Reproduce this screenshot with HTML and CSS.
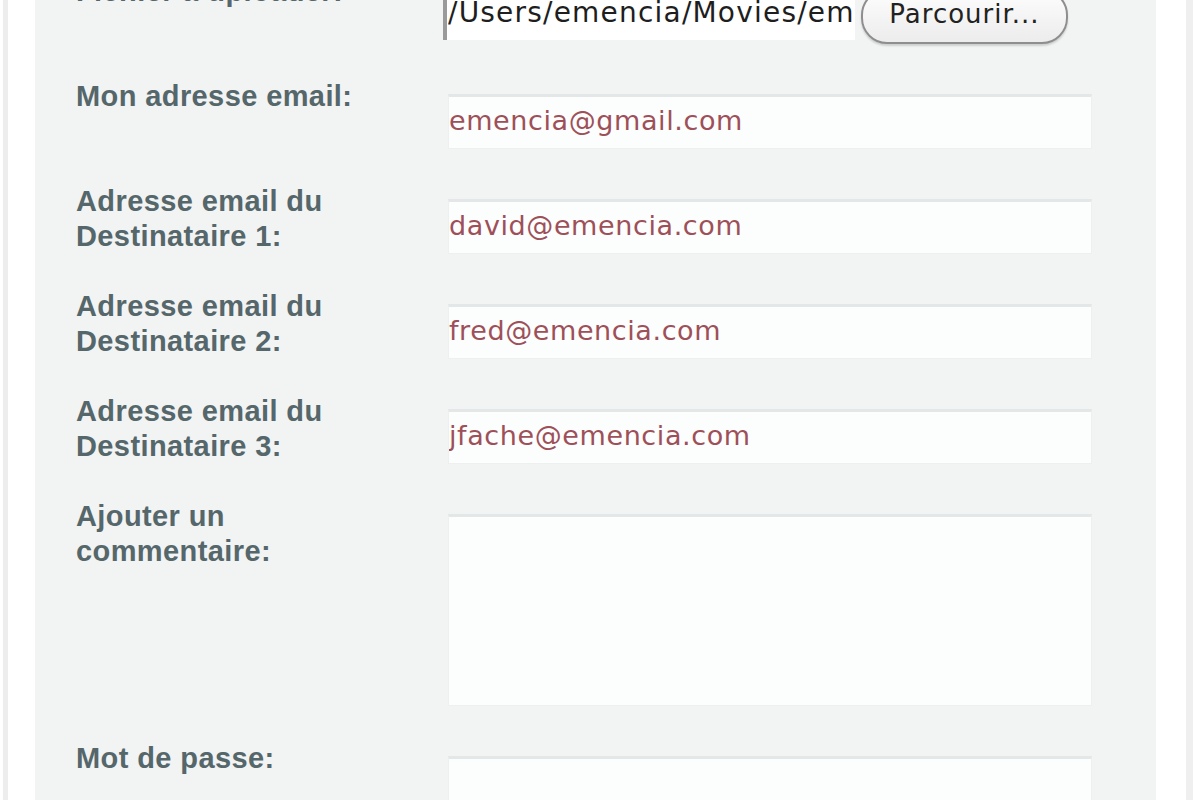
FILE: index.html
```html
<!DOCTYPE html>
<html lang="fr">
<head>
  <meta charset="UTF-8" />
  <meta name="viewport" content="width=device-width, initial-scale=1.0"/>
  <title>Envoyer une vidéo</title>
  <link rel="stylesheet" href="styles.css">
</head>
<body>
  <div class="page">
    <form class="upload-form">
      <div class="row">
        <label for="fichier">Fichier à uploader:</label>
        <div class="file-field">
          <input id="fichier" class="file-path" type="text" value="/Users/emencia/Movies/emencia.mov" readonly>
          <button type="button" class="browse">Parcourir...</button>
        </div>
      </div>

      <div class="row">
        <label for="email">Mon adresse email:</label>
        <input id="email" class="field" type="text" value="emencia@gmail.com">
      </div>

      <div class="row">
        <label for="dest1">Adresse email du Destinataire 1:</label>
        <input id="dest1" class="field" type="text" value="david@emencia.com">
      </div>

      <div class="row">
        <label for="dest2">Adresse email du Destinataire 2:</label>
        <input id="dest2" class="field" type="text" value="fred@emencia.com">
      </div>

      <div class="row">
        <label for="dest3">Adresse email du Destinataire 3:</label>
        <input id="dest3" class="field" type="text" value="jfache@emencia.com">
      </div>

      <div class="row">
        <label for="comment">Ajouter un commentaire:</label>
        <textarea id="comment" class="field comment"></textarea>
      </div>

      <div class="row">
        <label for="pass">Mot de passe:</label>
        <input id="pass" class="field" type="password">
      </div>
    </form>
  </div>
</body>
</html>
```

FILE: styles.css
```css
* { margin: 0; padding: 0; box-sizing: border-box; }

html, body {
  background: #fff;
  height: 100%;
  overflow: hidden;
}

.page {
  margin-left: 3px;
  width: 1190px;
  height: 100%;
  overflow: hidden;
  border-left: 5px solid #ededed;
  border-right: 7px solid #efefef;
  padding: 0 30px 0 27px;
}

.upload-form {
  background: #f2f3f3;
  height: calc(100% + 26px);
  padding-left: 41px;
  margin-top: -26px;
  display: flex;
  flex-direction: column;
  gap: 35px;
}

.row {
  display: grid;
  grid-template-columns: 372px 644px;
  align-items: start;
}

.row label {
  font-family: "Liberation Sans", Arial, sans-serif;
  font-weight: bold;
  font-size: 29px;
  line-height: 35px;
  letter-spacing: 0.4px;
  color: #55676a;
  padding-right: 40px;
}

.field {
  margin-top: 15px;
  height: 55px;
  width: 100%;
  background: #fcfdfd;
  border: 1px solid #eef0f0;
  border-top: 3px solid #e4e7e7;
  padding: 0 0 4px 0;
  font-family: "DejaVu Sans", Verdana, sans-serif;
  font-size: 27px;
  letter-spacing: 0.6px;
  color: #9e5059;
  outline: none;
}

.comment {
  height: 192px;
  resize: none;
}

.file-field {
  margin-top: 15px;
  height: 55px;
  margin-left: -5px;
  display: flex;
  align-items: center;
  gap: 6px;
}

.file-path {
  width: 412px;
  height: 51px;
  align-self: flex-start;
  background: #fff;
  border: none;
  border-left: 4px solid #9a9a9a;
  padding: 0 0 4px 1px;
  font-family: "DejaVu Sans", Verdana, sans-serif;
  font-size: 28px;
  letter-spacing: 1.2px;
  color: #1e1e1e;
  outline: none;
}

.browse {
  width: 207px;
  height: 55px;
  border: 2px solid #8e8e8e;
  border-radius: 26px;
  background: linear-gradient(#fdfdfd, #ececec);
  box-shadow: 0 2px 2px rgba(0, 0, 0, 0.15);
  padding-bottom: 6px;
  font-family: "DejaVu Sans", Verdana, sans-serif;
  font-size: 26px;
  letter-spacing: 1px;
  color: #222;
}
```
